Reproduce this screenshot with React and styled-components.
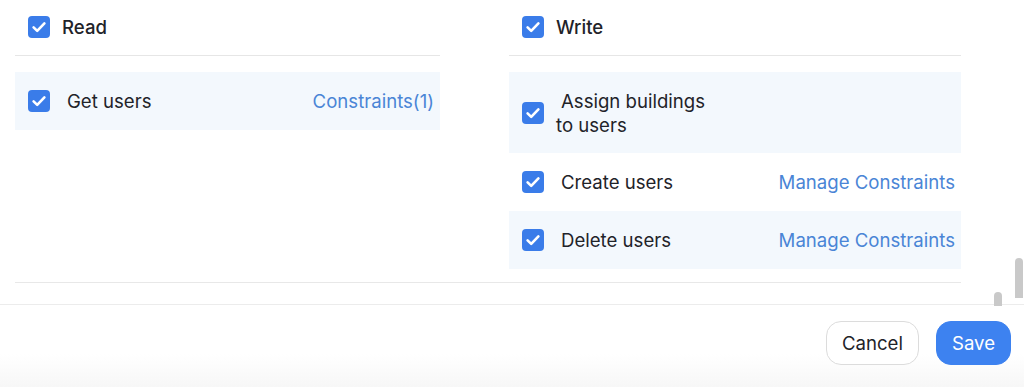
import React from "react";
import styled, { createGlobalStyle } from "styled-components";

const GlobalStyle = createGlobalStyle`
  body {
    margin: 0;
    background: #fff;
    font-family: Inter, "Noto Sans", sans-serif;
    color: #1f2329;
  }
`;

const read = [{ label: "Get users", link: "Constraints(1)", shaded: true, tall: false }];
const write = [
  { label: "Assign buildings to users", link: null, shaded: true, tall: true },
  { label: "Create users", link: "Manage Constraints", shaded: false, tall: false },
  { label: "Delete users", link: "Manage Constraints", shaded: true, tall: false },
];

function CheckBox() {
  return (
    <Box>
      <svg width="22" height="22" viewBox="0 0 22 22" fill="none">
        <path d="M5.6 11.4l3.6 3.5 7.2-7.5" stroke="#fff" strokeWidth="2.6" strokeLinecap="round" strokeLinejoin="round" />
      </svg>
    </Box>
  );
}

function Group({ title, items, width }) {
  return (
    <Column $width={width}>
      <Header>
        <CheckBox />
        <span>{title}</span>
      </Header>
      <List>
        {items.map((it) => (
          <Row key={it.label} $shaded={it.shaded} $tall={it.tall}>
            <CheckBox />
            <Label>{it.label}</Label>
            {it.link && <Link>{it.link}</Link>}
          </Row>
        ))}
      </List>
    </Column>
  );
}

export default function App() {
  return (
    <Page>
      <GlobalStyle />
      <Body>
        <Columns>
          <Group title="Read" items={read} width={425} />
          <Group title="Write" items={write} width={452} />
        </Columns>
        <Divider />
      </Body>
      <Footer>
        <Button>Cancel</Button>
        <Button $primary>Save</Button>
      </Footer>
      <ScrollThumb $x={994} $y={292} $h={14} />
      <ScrollThumb $x={1015} $y={258} $h={40} />
    </Page>
  );
}

const Page = styled.div`
  position: relative;
  height: 387px;
  overflow: hidden;
  display: flex;
  flex-direction: column;
`;

const Body = styled.div`
  padding: 0 15px;
  height: 305px;
  box-sizing: border-box;
  border-bottom: 1px solid #ececec;
`;

const Columns = styled.div`
  display: flex;
  gap: 69px;
  align-items: flex-start;
  height: 282px;
`;

const Column = styled.div`
  width: ${(p) => p.$width}px;
`;

const Header = styled.div`
  height: 56px;
  display: flex;
  align-items: center;
  gap: 12px;
  padding-left: 13px;
  border-bottom: 1px solid #e6e6e6;
  font-size: 18.6px;
  font-weight: 500;
  box-sizing: border-box;
  padding-bottom: 2px;
`;

const List = styled.div`
  margin-top: 16px;
`;

const Row = styled.div`
  display: flex;
  align-items: center;
  gap: 12px;
  padding: 0 6px 0 13px;
  min-height: ${(p) => (p.$tall ? 81 : 58)}px;
  background: ${(p) => (p.$shaded ? "#f3f8fd" : "#fff")};
  font-size: 18.6px;
`;

const Label = styled.div`
  text-indent: 5px;
  max-width: 165px;
  line-height: 24px;
  flex: 1;
`;

const Link = styled.a`
  margin-left: auto;
  color: #4a85d6;
  font-size: 18.6px;
  cursor: pointer;
`;

const Box = styled.span`
  flex: none;
  width: 22px;
  height: 22px;
  border-radius: 4px;
  background: #3a7ce9;
  display: flex;
  align-items: center;
  justify-content: center;
`;

const Divider = styled.div`
  border-top: 1px solid #e8e8e8;
  width: 946px;
`;

const Footer = styled.div`
  flex: 1;
  display: flex;
  justify-content: flex-end;
  align-items: flex-start;
  gap: 17px;
  padding: 16px 13px 0;
  background: linear-gradient(#fff 60%, #f7f7f7);
`;

const Button = styled.button`
  height: 44px;
  padding: 0 15px;
  border-radius: 15px;
  font-family: inherit;
  font-size: 18.6px;
  cursor: pointer;
  border: 1px solid ${(p) => (p.$primary ? "#3d82f0" : "#dcdcdc")};
  background: ${(p) => (p.$primary ? "#3d82f0" : "#fff")};
  color: ${(p) => (p.$primary ? "#fff" : "#1f2329")};
`;

const ScrollThumb = styled.div`
  position: absolute;
  left: ${(p) => p.$x}px;
  top: ${(p) => p.$y}px;
  width: 8px;
  height: ${(p) => p.$h}px;
  border-radius: 4px 4px 0 0;
  background: #c9c9c9;
`;
